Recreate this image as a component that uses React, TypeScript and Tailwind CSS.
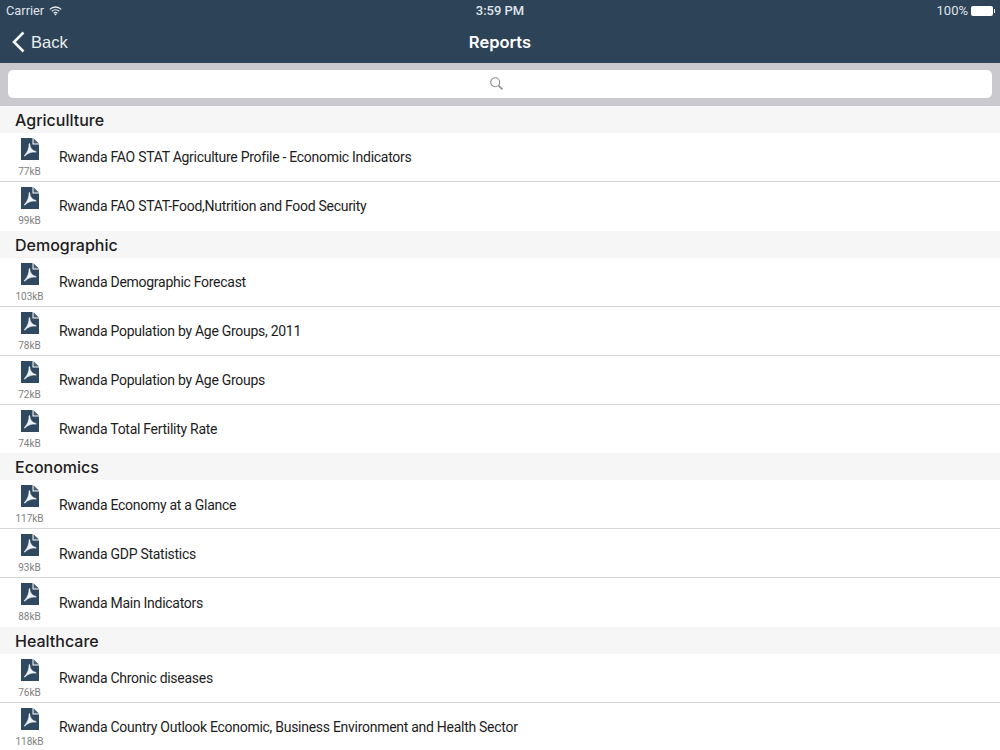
import React from 'react';

const sections = [
  {
    title: 'Agricullture',
    items: [
      { size: '77kB', label: 'Rwanda FAO STAT Agriculture Profile - Economic Indicators' },
      { size: '99kB', label: 'Rwanda FAO STAT-Food,Nutrition and Food Security' },
    ],
  },
  {
    title: 'Demographic',
    items: [
      { size: '103kB', label: 'Rwanda Demographic Forecast' },
      { size: '78kB', label: 'Rwanda Population by Age Groups, 2011' },
      { size: '72kB', label: 'Rwanda Population by Age Groups' },
      { size: '74kB', label: 'Rwanda Total Fertility Rate', short: true },
    ],
  },
  {
    title: 'Economics',
    nudge: true,
    items: [
      { size: '117kB', label: 'Rwanda Economy at a Glance' },
      { size: '93kB', label: 'Rwanda GDP Statistics' },
      { size: '88kB', label: 'Rwanda Main Indicators' },
    ],
  },
  {
    title: 'Healthcare',
    items: [
      { size: '76kB', label: 'Rwanda Chronic diseases' },
      { size: '118kB', label: 'Rwanda Country Outlook Economic, Business Environment and Health Sector' },
    ],
  },
];

const PdfIcon = () => (
  <svg width="18" height="22" viewBox="0 0 18 22" className="block">
    <path d="M0 0H11.5V6.5H18V22H0Z" fill="#2f4a60" />
    <path d="M12.5 0.3L18 5.6H12.5Z" fill="#4a6073" />
    <path
      d="M8 6C8.2 9.5 6.8 14 3.4 17.6C3 18 3.6 18.4 4 18C7 15 11 13.6 14.8 14.2C15.4 14.3 15.4 13.5 14.8 13.4C11.5 12.8 9 10 8.8 6C8.8 5.4 8 5.4 8 6Z"
      fill="#f0f3f5"
      stroke="#f0f3f5"
      strokeWidth="0.5"
      strokeLinejoin="round"
    />
  </svg>
);

const StatusBar = () => (
  <div className="h-5 flex items-center justify-between pl-[6px] pr-[5px] pt-[2px] relative text-[13px] text-[#dfe4e8]">
    <div className="flex items-center gap-[5px]">
      <span className="text-[12.8px]">Carrier</span>
      <svg width="13" height="10" viewBox="0 0 13 10" fill="none" stroke="#e8ecef" strokeWidth="1.3">
        <path d="M0.8 3.4C4 0.2 9 0.2 12.2 3.4" />
        <path d="M2.8 5.3C4.9 3.4 8.1 3.4 10.2 5.3" />
        <path d="M4.7 7.2C5.7 6.4 7.3 6.4 8.3 7.2" />
        <path d="M6.5 9.6L5.4 8.4C6 8 7 8 7.6 8.4Z" fill="#e8ecef" stroke="none" />
      </svg>
    </div>
    <span className="absolute left-0 right-0 text-center font-medium">3:59 PM</span>
    <div className="flex items-center gap-[3px]">
      <span>100%</span>
      <div className="flex items-center">
        <div className="w-[22px] h-[10px] bg-white rounded-[2px]" />
        <div className="w-[1px] h-[4px] bg-white ml-[1px]" />
      </div>
    </div>
  </div>
);

const NavBar = () => (
  <div className="h-[43px] relative flex items-center pl-[12px] pt-[1px]">
    <div className="flex items-center gap-[6px] text-[#e9edf0]">
      <svg width="13" height="22" viewBox="0 0 13 22" fill="none" stroke="#f2f4f6" strokeWidth="2.6">
        <path d="M11.5 1.5L2 11L11.5 20.5" />
      </svg>
      <span className="text-[16.5px] font-['Liberation_Sans',sans-serif]">Back</span>
    </div>
    <span className="absolute left-0 right-0 text-center text-[16.5px] font-semibold text-white font-['Inter',sans-serif]">
      Reports
    </span>
  </div>
);

const Row = ({ size, label, short, nudge }: { size: string; label: string; short?: boolean; nudge?: boolean }) => (
  <div
    className={`${short ? 'h-[48px]' : 'h-[49px]'} flex items-center border-b border-[#d6d6d8] last:border-b-0 bg-white`}
  >
    <div className="w-[59px] self-start flex flex-col items-center pt-[5px]">
      <PdfIcon />
      <span className="text-[10px] leading-[12px] mt-[6px] text-[#808080]">{size}</span>
    </div>
    <span className={`text-[14px] tracking-[-0.28px] text-[#1d1d1d] ${nudge ? 'pt-[2px]' : ''}`}>{label}</span>
  </div>
);

export default function App() {
  return (
    <div className="h-[750px] w-[1000px] overflow-hidden bg-white font-['Roboto',sans-serif]">
      <div className="bg-[#2d4358] h-[63px]">
        <StatusBar />
        <NavBar />
      </div>
      <div className="h-[43px] bg-[#c9c9ce] px-[8px] pt-[7px]">
        <div className="h-[28px] w-full bg-white rounded-[5px] flex items-center justify-center">
          <svg width="13" height="13" viewBox="0 0 13 13" fill="none" stroke="#8e8e93" strokeWidth="1.1" className="mr-[7px] -mt-[1px]">
            <circle cx="5.2" cy="5.2" r="4.5" />
            <path d="M8.6 8.6L12.4 12.4" strokeWidth="1.6" />
          </svg>
        </div>
      </div>
      {sections.map((section) => (
        <div key={section.title}>
          <div className="h-[27px] bg-[#f6f6f6] flex items-center pl-[15px] text-[16px] font-medium text-[#1d1d1d] font-['Inter',sans-serif]">
            {section.title}
          </div>
          {section.items.map((item) => (
            <Row key={item.label} size={item.size} label={item.label} short={item.short} nudge={section.nudge} />
          ))}
        </div>
      ))}
    </div>
  );
}
